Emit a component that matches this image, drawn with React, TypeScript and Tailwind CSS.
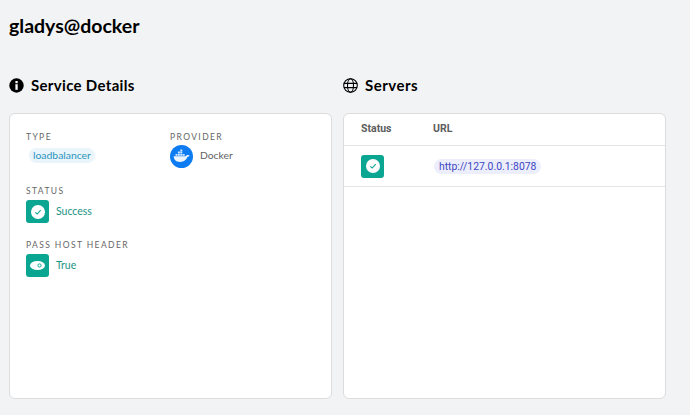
const StatusBadge = () => (
  <div className="flex h-[23px] w-[23px] items-center justify-center rounded-[3px] bg-[#0aa692]">
    <div className="flex h-[14px] w-[14px] items-center justify-center rounded-full bg-white">
      <svg width="8" height="8" viewBox="0 0 8 8" fill="none">
        <path d="M1.3 4.3 3.2 6 6.7 2.2" stroke="#0aa692" strokeWidth="1.1" />
      </svg>
    </div>
  </div>
)

const ToggleBadge = () => (
  <div className="flex h-[23px] w-[23px] items-center justify-center rounded-[3px] bg-[#0aa692]">
    <svg width="15" height="9" viewBox="0 0 15 9">
      <ellipse cx="7.5" cy="4.5" rx="7.5" ry="4.5" fill="#fff" />
      <circle cx="9.5" cy="4.5" r="1.6" fill="none" stroke="#0aa692" strokeWidth="1" />
    </svg>
  </div>
)

const Label = ({ children }: { children: string }) => (
  <div className="text-[8.5px] leading-[12px] font-normal tracking-[1.4px] text-[#666666]">{children}</div>
)

const DockerIcon = () => (
  <svg width="23" height="23" viewBox="0 0 23 23">
    <circle cx="11.5" cy="11.5" r="11.5" fill="#0d7cf2" />
    <path
      d="M3.6 11.2h12.2c.4-1 1.4-1.3 2.3-1.2.7.1 1.2.4 1.4.6-.5 1-1.3 1.3-2.2 1.4-1 2.8-3.2 4.9-7.3 4.9-3.7 0-6-1.8-6.4-5.7z"
      fill="#fff"
      opacity="0.92"
    />
    <path
      d="M5.5 8.9h2v1.8h-2zM7.9 8.9h2v1.8h-2zM10.3 8.9h2v1.8h-2zM12.7 8.9h2v1.8h-2zM7.9 6.6h2v1.8h-2zM10.3 6.6h2v1.8h-2zM10.3 4.4h2v1.8h-2z"
      fill="#fff"
      opacity="0.8"
    />
  </svg>
)

const InfoIcon = () => (
  <svg width="15" height="15" viewBox="0 0 15 15">
    <circle cx="7.5" cy="7.5" r="7.2" fill="#000" />
    <rect x="6.4" y="3" width="2.3" height="2.2" fill="#fff" />
    <rect x="6.4" y="6.2" width="2.3" height="5.6" fill="#fff" />
  </svg>
)

const GlobeIcon = () => (
  <svg width="15" height="15" viewBox="0 0 15 15" fill="none" stroke="#000" strokeWidth="1.1">
    <circle cx="7.5" cy="7.5" r="6.8" />
    <ellipse cx="7.5" cy="7.5" rx="3" ry="6.8" />
    <path d="M.9 5.4h13.2M.9 9.6h13.2" />
  </svg>
)

export default function App() {
  return (
    <div className="flex h-[415px] w-[690px] flex-col overflow-hidden bg-[#f2f3f5] pl-[9px] pr-[24px] font-['Lato',sans-serif]">
      <h1 className="mt-[15px] text-[19.5px] leading-[22px] font-bold text-black">gladys@docker</h1>
      <div className="mt-[39px] flex gap-[11px]">
        <section className="w-[323px]">
          <div className="flex h-[18px] items-center gap-[7px]">
            <InfoIcon />
            <h2 className="text-[15px] font-bold tracking-[0.32px] text-black">Service Details</h2>
          </div>
          <div className="mt-[19px] h-[286px] rounded-[6px] border border-[#dcdcdc] bg-white pl-[16px] pt-[17px]">
            <div className="flex">
              <div className="w-[144px]">
                <Label>TYPE</Label>
                <div className="mt-[5px] ml-[3px] w-fit rounded-full bg-[#e9f5fa] px-[4px] text-[10.4px] leading-[15px] text-[#2b94bf]">
                  loadbalancer
                </div>
              </div>
              <div>
                <Label>PROVIDER</Label>
                <div className="mt-[2px] flex items-center gap-[7px]">
                  <DockerIcon />
                  <span className="pb-[2px] text-[10.3px] text-[#5f5f5f]">Docker</span>
                </div>
              </div>
            </div>
            <div className="mt-[17px]">
              <Label>STATUS</Label>
              <div className="mt-[3px] flex items-center gap-[7px]">
                <StatusBadge />
                <span className="text-[10.5px] text-[#1d9384]">Success</span>
              </div>
            </div>
            <div className="mt-[16px]">
              <Label>PASS HOST HEADER</Label>
              <div className="mt-[3px] flex items-center gap-[7px]">
                <ToggleBadge />
                <span className="text-[10.5px] text-[#1d9384]">True</span>
              </div>
            </div>
          </div>
        </section>
        <section className="w-[323px]">
          <div className="flex h-[18px] items-center gap-[7px]">
            <GlobeIcon />
            <h2 className="text-[15px] font-bold tracking-[0.5px] text-black">Servers</h2>
          </div>
          <div className="mt-[19px] h-[286px] rounded-[6px] border border-[#dcdcdc] bg-white">
            <div className="flex h-[32px] items-center border-b border-[#e4e4e4] pb-[2px] pl-[17px] text-[10.5px] font-bold text-[#5c5c5c]">
              <span className="w-[72px] font-['Roboto',sans-serif]">Status</span>
              <span className="font-['Roboto',sans-serif]">URL</span>
            </div>
            <div className="flex h-[41px] items-center border-b border-[#e4e4e4] pl-[17px]">
              <div className="w-[73px]">
                <StatusBadge />
              </div>
              <span className="rounded-full bg-[#edeefb] px-[5px] font-['Roboto',sans-serif] text-[10.4px] leading-[15px] text-[#3b46c4]">
                http://127.0.0.1:8078
              </span>
            </div>
          </div>
        </section>
      </div>
    </div>
  )
}
